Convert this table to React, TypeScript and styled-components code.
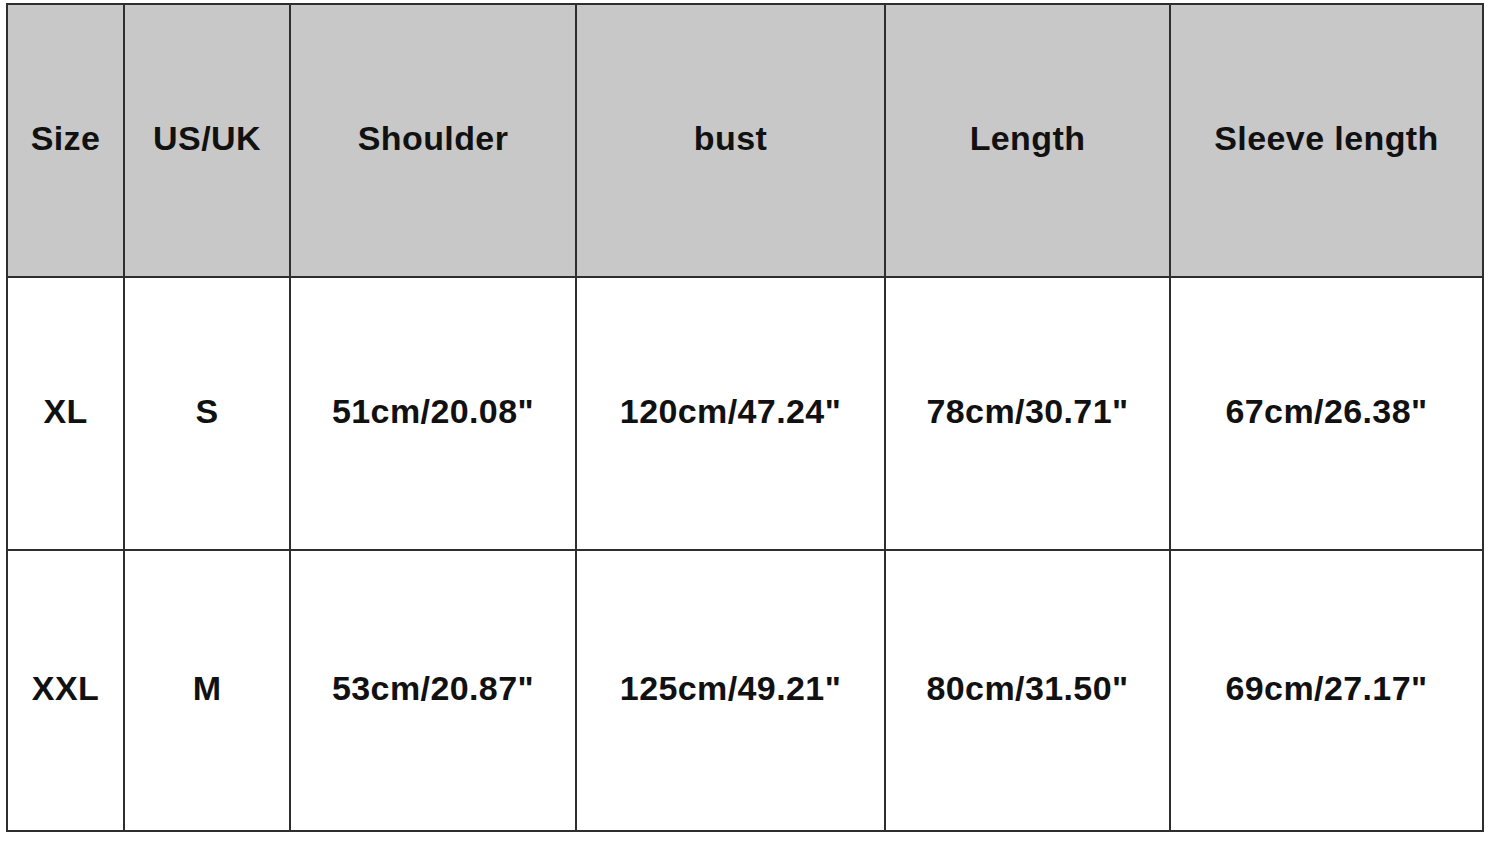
import React from 'react';
import styled, { createGlobalStyle } from 'styled-components';

const Global = createGlobalStyle`
  html, body {
    margin: 0;
    background: #ffffff;
  }
`;

const Page = styled.div`
  padding: 3px 0 0 6px;
`;

const Table = styled.table`
  border-collapse: collapse;
  table-layout: fixed;
  width: 1476px;
  font-family: 'Liberation Sans', Arial, sans-serif;
  font-weight: bold;
  font-size: 34px;
  letter-spacing: 0.4px;
  color: #111111;
`;

const HeadCell = styled.th`
  background: #c8c8c8;
  border: 2px solid #2e2e2e;
  height: 267px;
  padding: 0 0 4px;
  text-align: center;
  font-weight: bold;
`;

const Cell = styled.td<{ $tall?: boolean }>`
  border: 2px solid #2e2e2e;
  height: ${(p) => (p.$tall ? '275px' : '267px')};
  padding: 0 0 4px;
  text-align: center;
`;

const widths = [117, 166, 286, 309, 285, 313];
const headers = ['Size', 'US/UK', 'Shoulder', 'bust', 'Length', 'Sleeve length'];
const rows = [
  ['XL', 'S', '51cm/20.08"', '120cm/47.24"', '78cm/30.71"', '67cm/26.38"'],
  ['XXL', 'M', '53cm/20.87"', '125cm/49.21"', '80cm/31.50"', '69cm/27.17"'],
];

export default function App() {
  return (
    <Page>
      <Global />
      <Table>
        <colgroup>
          {widths.map((w, i) => (
            <col key={i} style={{ width: w }} />
          ))}
        </colgroup>
        <thead>
          <tr>
            {headers.map((h) => (
              <HeadCell key={h}>{h}</HeadCell>
            ))}
          </tr>
        </thead>
        <tbody>
          {rows.map((r, i) => (
            <tr key={i}>
              {r.map((c, j) => (
                <Cell key={j} $tall={i === rows.length - 1}>
                  {c}
                </Cell>
              ))}
            </tr>
          ))}
        </tbody>
      </Table>
    </Page>
  );
}
